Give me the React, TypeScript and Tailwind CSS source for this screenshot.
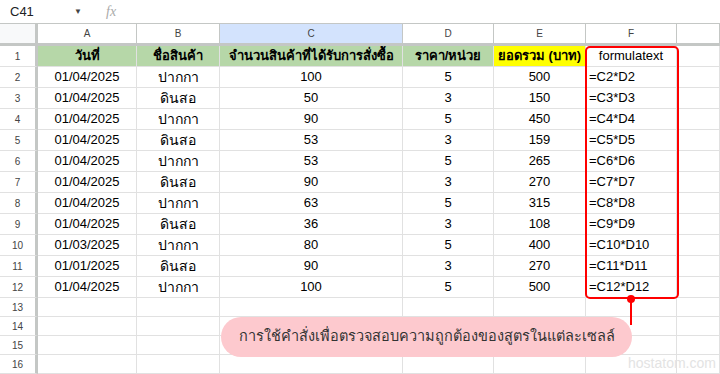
import React from "react";

const COLS = [38, 99, 83, 183, 91, 92, 91, 43];
const LETTERS = ["A", "B", "C", "D", "E", "F", ""];

const DATA: [string, string, string, string, string][] = [
  ["01/04/2025", "ปากกา", "100", "5", "500"],
  ["01/04/2025", "ดินสอ", "50", "3", "150"],
  ["01/04/2025", "ปากกา", "90", "5", "450"],
  ["01/04/2025", "ดินสอ", "53", "3", "159"],
  ["01/04/2025", "ปากกา", "53", "5", "265"],
  ["01/04/2025", "ดินสอ", "90", "3", "270"],
  ["01/04/2025", "ปากกา", "63", "5", "315"],
  ["01/04/2025", "ดินสอ", "36", "3", "108"],
  ["01/03/2025", "ปากกา", "80", "5", "400"],
  ["01/01/2025", "ดินสอ", "90", "3", "270"],
  ["01/04/2025", "ปากกา", "100", "5", "500"],
];

const font = { fontFamily: '"Liberation Sans", Arial, "Noto Sans", sans-serif' };

function RowHeader({ n, h }: { n: number; h: number }) {
  return (
    <div
      className="flex items-center justify-center shrink-0 border-r-[3px] border-r-[#c4c7c5] border-b border-b-[#e1e1e1] text-[10px] text-[#444]"
      style={{ width: COLS[0], height: h }}
    >
      {n}
    </div>
  );
}

function Cell({
  w,
  h,
  children,
  className = "",
}: {
  w: number;
  h: number;
  children?: React.ReactNode;
  className?: string;
}) {
  return (
    <div
      className={`flex items-center shrink-0 border-r border-b border-[#e1e1e1] overflow-hidden whitespace-nowrap ${className}`}
      style={{ width: w, height: h }}
    >
      {children}
    </div>
  );
}

export default function App() {
  return (
    <div className="relative w-[720px] h-[374px] overflow-hidden bg-white text-black" style={font}>
      {/* formula bar */}
      <div className="flex items-center h-[24px] border-b border-[#c4c7c5] text-[13px]">
        <div className="w-[92px] pl-[10px] flex items-center justify-between pr-[10px]">
          <span className="text-[#202124]">C41</span>
          <span className="text-[8px] text-[#444]">▼</span>
        </div>
        <span className="ml-[14px] italic text-[#aaa] text-[14px]" style={{ fontFamily: '"Liberation Serif", serif' }}>
          fx
        </span>
      </div>

      {/* column header */}
      <div className="flex h-[22px] border-b-[3px] border-b-[#c4c7c5]">
        <div className="shrink-0 bg-[#f8f9fa] border-r-[3px] border-r-[#c4c7c5]" style={{ width: COLS[0] }} />
        {LETTERS.map((l, i) => (
          <div
            key={i}
            className={`shrink-0 flex items-center justify-center text-[10px] text-[#444] border-r border-[#c4c7c5] ${
              l === "C" ? "bg-[#d3e3fd]" : "bg-white"
            }`}
            style={{ width: COLS[i + 1] }}
          >
            {l}
          </div>
        ))}
      </div>

      {/* row 1 */}
      <div className="flex text-[13px]">
        <RowHeader n={1} h={21} />
        <Cell w={COLS[1]} h={21} className="justify-center font-bold bg-[#b6d7a8]">วันที่</Cell>
        <Cell w={COLS[2]} h={21} className="justify-center font-bold bg-[#b6d7a8]">ชื่อสินค้า</Cell>
        <Cell w={COLS[3]} h={21} className="justify-center font-bold bg-[#b6d7a8]">จำนวนสินค้าที่ได้รับการสั่งซื้อ</Cell>
        <Cell w={COLS[4]} h={21} className="justify-center font-bold bg-[#b6d7a8]">ราคา/หน่วย</Cell>
        <Cell w={COLS[5]} h={21} className="justify-center font-bold bg-[#ffff00]">ยอดรวม (บาท)</Cell>
        <Cell w={COLS[6]} h={21} className="justify-center">formulatext</Cell>
        <Cell w={COLS[7]} h={21} />
      </div>

      {DATA.map((r, i) => (
        <div key={i} className="flex text-[13px]">
          <RowHeader n={i + 2} h={21} />
          <Cell w={COLS[1]} h={21} className="justify-center">{r[0]}</Cell>
          <Cell w={COLS[2]} h={21} className="justify-center text-[14px]">{r[1]}</Cell>
          <Cell w={COLS[3]} h={21} className="justify-center">{r[2]}</Cell>
          <Cell w={COLS[4]} h={21} className="justify-center">{r[3]}</Cell>
          <Cell w={COLS[5]} h={21} className="justify-center">{r[4]}</Cell>
          <Cell w={COLS[6]} h={21} className="pl-[3px]">{`=C${i + 2}*D${i + 2}`}</Cell>
          <Cell w={COLS[7]} h={21} />
        </div>
      ))}

      {[13, 14, 15, 16].map((n) => (
        <div key={n} className="flex">
          <RowHeader n={n} h={19} />
          {COLS.slice(1).map((w, j) => (
            <Cell key={j} w={w} h={19} />
          ))}
        </div>
      ))}

      {/* red box */}
      <div className="absolute left-[585px] top-[46px] w-[94px] h-[253px] border-2 border-[#ff0000] rounded-[5px]" />
      {/* connector */}
      <div className="absolute left-[630px] top-[299px] w-[2px] h-[26px] bg-[#ff0000]" />
      <div className="absolute left-[627px] top-[295px] w-[8px] h-[8px] rounded-full bg-[#ff0000]" />

      {/* callout */}
      <div className="absolute left-[221px] top-[317px] w-[411px] h-[40px] rounded-[20px] bg-[#fdc9ce] flex items-center justify-center whitespace-nowrap text-[14.5px] text-[#333]">
        การใช้คำสั่งเพื่อตรวจสอบความถูกต้องของสูตรในแต่ละเซลล์
      </div>

      {/* watermark */}
      <div className="absolute left-[628px] top-[355px] text-[14px] leading-[17px] text-[#e3e3e3]">hostatom.com</div>
    </div>
  );
}
